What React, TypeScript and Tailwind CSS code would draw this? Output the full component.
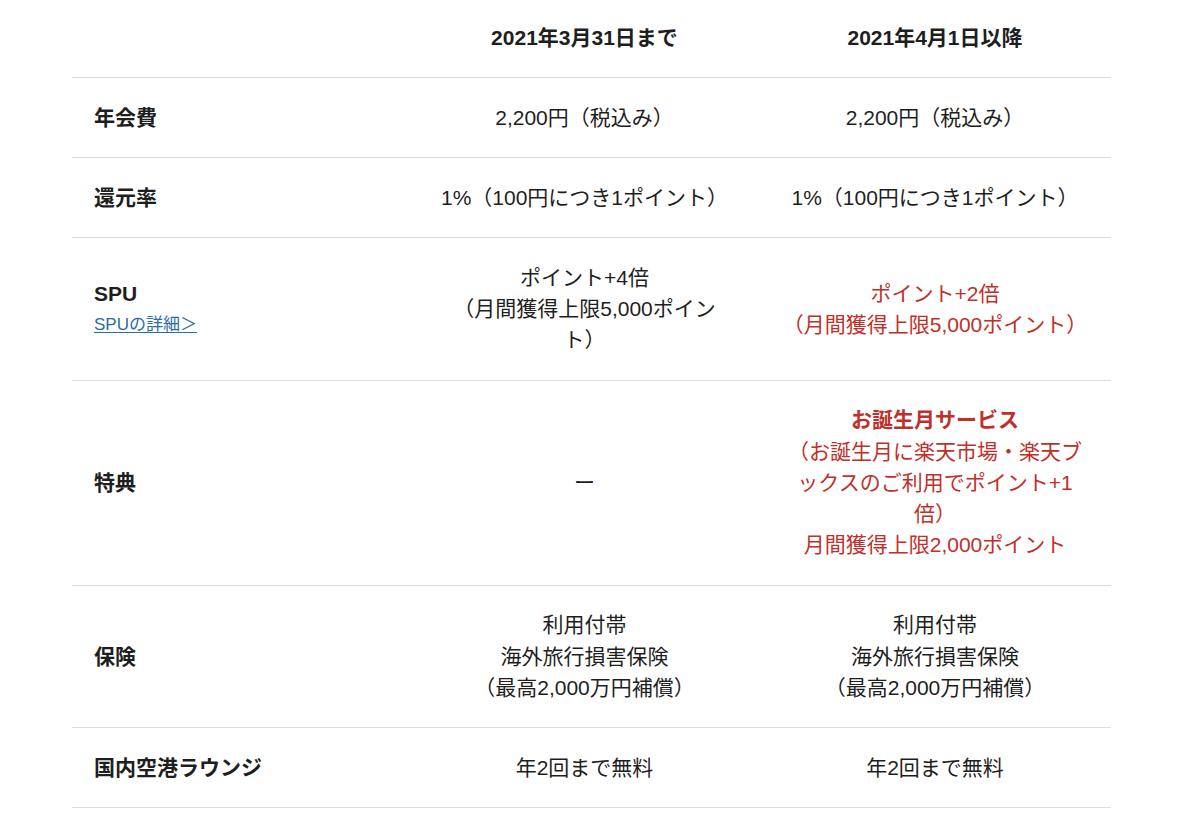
const font = "font-['Liberation_Sans','Noto_Sans_CJK_JP',sans-serif]";

type Row = {
  label: React.ReactNode;
  before: React.ReactNode;
  after: React.ReactNode;
};

const red = "text-[#c0302a]";

const rows: Row[] = [
  {
    label: "年会費",
    before: "2,200円（税込み）",
    after: "2,200円（税込み）",
  },
  {
    label: "還元率",
    before: "1%（100円につき1ポイント）",
    after: "1%（100円につき1ポイント）",
  },
  {
    label: (
      <div>
        <div>SPU</div>
        <a
          href="#"
          className="block text-[17px] font-normal text-[#2a6ca8] underline underline-offset-2 leading-[31px]"
        >
          SPUの詳細＞
        </a>
      </div>
    ),
    before: (
      <>
        ポイント+4倍
        <br />
        （月間獲得上限5,000ポイン
        <br />
        ト）
      </>
    ),
    after: (
      <span className={red}>
        ポイント+2倍
        <br />
        （月間獲得上限5,000ポイント）
      </span>
    ),
  },
  {
    label: "特典",
    before: "ー",
    after: (
      <span className={red}>
        <span className="font-bold">お誕生月サービス</span>
        <br />
        （お誕生月に楽天市場・楽天ブ
        <br />
        ックスのご利用でポイント+1
        <br />
        倍）
        <br />
        月間獲得上限2,000ポイント
      </span>
    ),
  },
  {
    label: "保険",
    before: (
      <>
        利用付帯
        <br />
        海外旅行損害保険
        <br />
        （最高2,000万円補償）
      </>
    ),
    after: (
      <>
        利用付帯
        <br />
        海外旅行損害保険
        <br />
        （最高2,000万円補償）
      </>
    ),
  },
  {
    label: "国内空港ラウンジ",
    before: "年2回まで無料",
    after: "年2回まで無料",
  },
];

export default function App() {
  return (
    <div className={`${font} w-[1200px] h-[822px] overflow-hidden bg-white text-[#1e1e1e] text-[21px] leading-[31.25px]`}>
      <div className="ml-[72px] w-[1039px] -mt-[2px]">
        <div className="grid grid-cols-[338px_349px_352px] border-b border-[#dedede] font-bold">
          <div className="py-[23.875px]" />
          <div className="py-[23.875px] text-center whitespace-nowrap">2021年3月31日まで</div>
          <div className="py-[23.875px] text-center whitespace-nowrap">2021年4月1日以降</div>
        </div>
        {rows.map((row, i) => (
          <div
            key={i}
            className="grid grid-cols-[338px_349px_352px] border-b border-[#dedede] items-center"
          >
            <div className="py-[23.875px] pl-[22px] font-bold whitespace-nowrap">{row.label}</div>
            <div className="py-[23.875px] text-center whitespace-nowrap">{row.before}</div>
            <div className="py-[23.875px] text-center whitespace-nowrap">{row.after}</div>
          </div>
        ))}
      </div>
    </div>
  );
}
